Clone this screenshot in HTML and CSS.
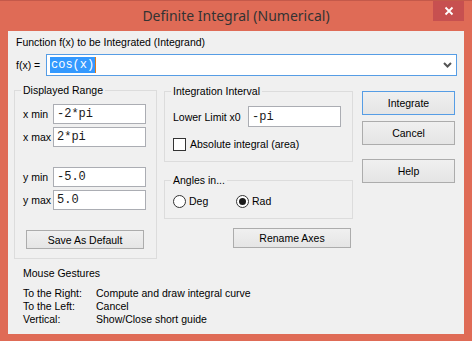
FILE: index.html
```html
<!DOCTYPE html>
<html lang="en">

<head>
    <meta charset="UTF-8">
    <meta name="viewport" content="width=device-width, initial-scale=1.0">
    <title>Definite Integral (Numerical)</title>
    <link rel="stylesheet" href="styles.css">
</head>

<body>
    <div class="window">
        <div class="titlebar">
            <span class="title">Definite Integral (Numerical)</span>
            <button class="close">
                <svg width="10" height="10" viewBox="0 0 10 10">
                    <path d="M1.5 1.5 L8.5 8.5 M8.5 1.5 L1.5 8.5" stroke="#fff" stroke-width="1.8" />
                </svg>
            </button>
        </div>

        <div class="client">
            <div class="caption">Function f(x) to be Integrated (Integrand)</div>
            <div class="func-row">
                <span class="func-label">f(x) =</span>
                <div class="combo">
                    <span class="selected">cos(x)</span><span class="caret"></span>
                    <svg class="chevron" width="9" height="6" viewBox="0 0 9 6">
                        <path d="M1 1 L4.5 4.5 L8 1" stroke="#555" stroke-width="2" fill="none" />
                    </svg>
                </div>
            </div>

            <div class="main">
                <fieldset class="group range">
                    <legend>Displayed Range</legend>
                    <div class="field"><span>x min</span><input class="mono" value="-2*pi"></div>
                    <div class="field"><span>x max</span><input class="mono" value="2*pi"></div>
                    <div class="field spaced"><span>y min</span><input class="mono" value="-5.0"></div>
                    <div class="field"><span>y max</span><input class="mono" value="5.0"></div>
                    <button class="btn save">Save As Default</button>
                </fieldset>

                <div class="middle">
                    <fieldset class="group interval">
                        <legend>Integration Interval</legend>
                        <div class="limit"><span>Lower Limit x0</span><input class="mono" value="-pi"></div>
                        <label class="check"><span class="box"></span>Absolute integral (area)</label>
                    </fieldset>
                    <fieldset class="group angles">
                        <legend>Angles in...</legend>
                        <div class="radios">
                            <label class="radio"><span class="dot"></span>Deg</label>
                            <label class="radio on"><span class="dot"></span>Rad</label>
                        </div>
                    </fieldset>
                    <button class="btn rename">Rename Axes</button>
                </div>

                <div class="actions">
                    <button class="btn default">Integrate</button>
                    <button class="btn">Cancel</button>
                    <button class="btn help">Help</button>
                </div>
            </div>

            <div class="gestures">
                <div class="gestures-title">Mouse Gestures</div>
                <div class="gesture"><span>To the Right:</span>Compute and draw integral curve</div>
                <div class="gesture"><span>To the Left:</span>Cancel</div>
                <div class="gesture"><span>Vertical:</span>Show/Close short guide</div>
            </div>
        </div>
    </div>
</body>

</html>
```

FILE: styles.css
```css
* {
    padding: 0;
    margin: 0;
    box-sizing: border-box;
}

body {
    background: #df6b56;
    font-family: "Liberation Sans", Arial, sans-serif;
    font-size: 10.5px;
    color: #000;
}

.window {
    width: 472px;
    height: 341px;
    border-top: 1px solid #c4594a;
}

.titlebar {
    height: 30px;
    display: grid;
    grid-template-columns: 1fr auto 1fr;
    align-items: start;
}

.titlebar .title {
    grid-column: 2;
    font-family: "Noto Sans", sans-serif;
    font-size: 14px;
    line-height: 29px;
    color: #333;
}

.titlebar .close {
    grid-column: 3;
    justify-self: end;
    margin-right: 8px;
    width: 31px;
    height: 20px;
    border: none;
    background: #c75050;
    display: flex;
    align-items: center;
    justify-content: center;
}

.client {
    margin-left: 8px;
    width: 456px;
    height: 303px;
    background: #f0f0f0;
}

.caption {
    padding: 5px 0 0 8px;
    line-height: 13px;
}

.func-row {
    display: flex;
    align-items: center;
    margin-top: 5px;
    padding-left: 8px;
}

.func-label {
    width: 30px;
}

.combo {
    width: 411px;
    height: 22px;
    border: 1px solid #569de5;
    background: #fff;
    display: flex;
    align-items: center;
    padding-left: 3px;
}

.combo .selected {
    font-family: "Liberation Mono", "Courier New", monospace;
    font-size: 12px;
    line-height: 16px;
    background: #3399ff;
    color: #fff;
    padding: 0 1px;
}

.combo .caret {
    width: 1px;
    height: 16px;
    background: #e07a1a;
}

.combo .chevron {
    margin-left: auto;
    margin-right: 4px;
}

.main {
    display: flex;
    align-items: flex-start;
    margin-top: 8px;
    padding-left: 6px;
}

.group {
    border: 1px solid #dcdcdc;
    padding: 0 8px;
    min-width: 0;
}

.group legend {
    line-height: 13px;
    padding: 0 2px;
    margin-left: -2px;
}

.range {
    width: 143px;
    padding-top: 7px;
    padding-bottom: 9px;
}

.field {
    display: flex;
    align-items: center;
    margin-bottom: 3px;
}

.field.spaced {
    margin-top: 20px;
}

.field span {
    width: 30px;
}

input {
    width: 93px;
    height: 20px;
    border: 1px solid #abadb3;
    background: #fff;
    padding-left: 3px;
    outline: none;
}

.mono {
    font-family: "Liberation Mono", "Courier New", monospace;
    font-size: 12px;
    color: #1a1a1a;
}

.btn {
    font-family: "Liberation Sans", Arial, sans-serif;
    font-size: 10.5px;
    color: #000;
    height: 20px;
    border: 1px solid #acacac;
    background: linear-gradient(#f0f0f0, #e5e5e5);
}

.save {
    display: block;
    width: 118px;
    margin: 20px 0 0 3px;
    height: 19px;
}

.middle {
    width: 189px;
    margin-left: 7px;
    margin-top: 1px;
    display: flex;
    flex-direction: column;
}

.interval {
    padding-top: 8px;
    padding-bottom: 10px;
}

.limit {
    display: flex;
    align-items: center;
}

.limit span {
    width: 75px;
}

.limit input {
    height: 21px;
}

.check {
    display: flex;
    align-items: center;
    margin-top: 11px;
    line-height: 13px;
}

.check .box {
    width: 13px;
    height: 13px;
    border: 1px solid #333;
    background: #fff;
    margin-right: 4px;
}

.angles {
    margin-top: 12px;
    padding-top: 8px;
    padding-bottom: 10px;
}

.radios {
    display: flex;
    line-height: 13px;
}

.radio {
    display: flex;
    align-items: center;
    width: 63px;
}

.radio .dot {
    width: 13px;
    height: 13px;
    border: 1px solid #333;
    border-radius: 50%;
    background: #fff;
    margin-right: 3px;
    display: flex;
    align-items: center;
    justify-content: center;
}

.radio.on .dot::before {
    content: '';
    width: 7px;
    height: 7px;
    border-radius: 50%;
    background: #1a1a1a;
}

.rename {
    align-self: flex-end;
    width: 118px;
    margin: 9px 2px 0 0;
}

.actions {
    width: 93px;
    margin-left: 9px;
    margin-top: 7px;
    display: flex;
    flex-direction: column;
    gap: 6px;
}

.actions .btn {
    height: 24px;
}

.actions .default {
    border-color: #569de5;
}

.actions .help {
    margin-top: 8px;
}

.gestures {
    padding-left: 15px;
    margin-top: 8px;
    line-height: 13px;
}

.gestures-title {
    margin-bottom: 7px;
}

.gesture span {
    display: inline-block;
    width: 73px;
}
```
